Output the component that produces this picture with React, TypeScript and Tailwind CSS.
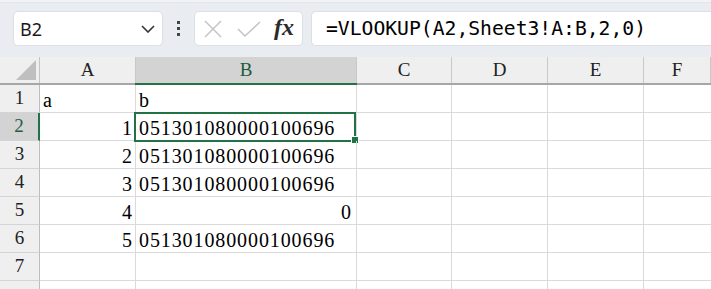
import React from "react";

const cols = [
  { k: "A", w: "w-[96px]" },
  { k: "B", w: "w-[221px]" },
  { k: "C", w: "w-[95px]" },
  { k: "D", w: "w-[96px]" },
  { k: "E", w: "w-[96px]" },
  { k: "F", w: "flex-1" },
];

const rows: { a: string; b: string; bRight?: boolean }[] = [
  { a: "a", b: "b" },
  { a: "1", b: "051301080000100696" },
  { a: "2", b: "051301080000100696" },
  { a: "3", b: "051301080000100696" },
  { a: "4", b: "0", bRight: true },
  { a: "5", b: "051301080000100696" },
  { a: "", b: "" },
  { a: "", b: "" },
];

const serif = "font-['Liberation_Serif',serif]";

export default function App() {
  return (
    <div className="w-[711px] h-[289px] overflow-hidden bg-white">
      {/* toolbar */}
      <div className="h-[57px] bg-[#e9ecf0] relative flex items-start pt-[11px]">
        <div className="absolute left-0 top-0 w-full h-[3px] bg-[#f1f3f6] border-b border-[#e2e5ea]" />
        <div className="ml-[13px] w-[150px] h-[35px] bg-white rounded-[5px] border border-[#dcdfe4] flex items-center pl-[6px] pr-[7px]">
          <span className="font-['Noto_Sans',sans-serif] text-[18px] text-[#1a1a1a] leading-none">B2</span>
          <svg className="ml-auto" width="14" height="8" viewBox="0 0 14 8">
            <path d="M1 1 L7 7 L13 1" fill="none" stroke="#333" strokeWidth="1.6" />
          </svg>
        </div>
        <div className="w-[31px] h-[35px] flex flex-col items-center justify-center gap-[3px]">
          <div className="w-[3px] h-[3px] bg-[#444]" />
          <div className="w-[3px] h-[3px] bg-[#444]" />
          <div className="w-[3px] h-[3px] bg-[#444]" />
        </div>
        <div className="w-[109px] h-[35px] bg-white rounded-[5px] border border-[#dcdfe4] flex items-center pl-[9px]">
          <svg width="18" height="18" viewBox="0 0 18 18">
            <path d="M1 1 L17 17 M17 1 L1 17" stroke="#c4c4c4" strokeWidth="1.5" />
          </svg>
          <svg className="ml-[15px]" width="24" height="16" viewBox="0 0 24 16">
            <path d="M1 8 L8 15 L23 1" fill="none" stroke="#c4c4c4" strokeWidth="1.5" />
          </svg>
          <span className={`ml-[13px] ${serif} italic font-semibold text-[24px] text-[#2b2b2b] leading-none -mt-[3px]`}>fx</span>
        </div>
        <div className="ml-[8px] flex-1 h-[35px] bg-white rounded-l-[5px] border border-r-0 border-[#dcdfe4] flex items-center pl-[14px]">
          <span className="font-['DejaVu_Sans_Mono',monospace] text-[19.7px] text-black leading-none">
            =VLOOKUP(A2,Sheet3!A:B,2,0)
          </span>
        </div>
      </div>

      {/* column header */}
      <div className="flex h-[28px] bg-[#efefef] border-b-2 border-[#a6a6a6]">
        <div className="w-[40px] shrink-0 border-r border-[#c4c4c4] relative">
          <svg className="absolute left-[16px] top-[3px]" width="20" height="20" viewBox="0 0 20 20">
            <path d="M20 0 L20 20 L0 20 Z" fill="#bfbfbf" />
          </svg>
        </div>
        {cols.map((c) => (
          <div
            key={c.k}
            className={`${c.w} shrink-0 border-r border-[#c8c8c8] flex items-center justify-center ${serif} text-[19px] ${
              c.k === "B" ? "bg-[#d3d3d3] text-[#1d5d3e] relative" : "text-[#222]"
            }`}
          >
            {c.k}
            {c.k === "B" && <div className="absolute left-[-1px] right-[-1px] bottom-[-2px] h-[2px] bg-[#217346]" />}
          </div>
        ))}
      </div>

      {/* rows */}
      {rows.map((r, i) => {
        const sel = i === 1;
        return (
          <div key={i} className="flex h-[28px]">
            <div
              className={`w-[40px] shrink-0 border-b border-[#d4d4d4] flex items-center justify-center ${serif} text-[19px] ${
                sel ? "bg-[#d3d3d3] text-[#2a5a44] border-r-2 border-r-[#217346]" : "bg-[#efefef] text-[#222] border-r border-r-[#bdbdbd]"
              }`}
            >
              {i < 7 ? i + 1 : ""}
            </div>
            <div className={`w-[96px] shrink-0 border-r border-b border-[#dadada] flex items-center ${r.a === "a" ? "justify-start pl-[3px]" : "justify-end pr-[3px]"} ${serif} text-[20px] text-black pt-[2px]`}>
              {r.a}
            </div>
            <div className={`w-[221px] shrink-0 border-r border-b border-[#dadada] flex items-center relative ${r.bRight ? "justify-end pr-[4px]" : "justify-start pl-[3px]"} ${serif} text-[20px] tracking-[0.9px] text-black pt-[2px]`}>
              {r.b}
              {sel && (
                <>
                  <div className="absolute left-[-2px] top-[-1px] w-[222px] h-[30px] border-2 border-[#217346] pointer-events-none" />
                  <div className="absolute left-[215px] top-[23px] w-[8px] h-[8px] bg-[#217346] border border-white box-border" />
                </>
              )}
            </div>
            <div className="w-[95px] shrink-0 border-r border-b border-[#dadada]" />
            <div className="w-[96px] shrink-0 border-r border-b border-[#dadada]" />
            <div className="w-[96px] shrink-0 border-r border-b border-[#dadada]" />
            <div className="flex-1 border-b border-[#dadada]" />
          </div>
        );
      })}
    </div>
  );
}
